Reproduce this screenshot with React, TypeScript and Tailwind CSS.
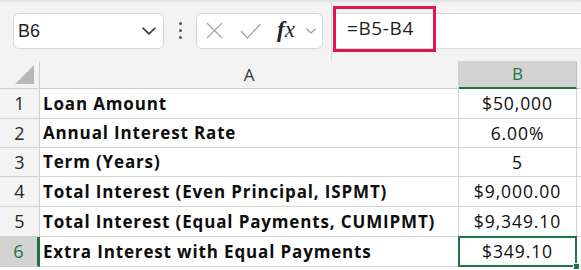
import React from "react";

const rows = [
  { n: "1", a: "Loan Amount", b: "$50,000", h: "h-[30px]" },
  { n: "2", a: "Annual Interest Rate", b: "6.00%", h: "h-[29px]" },
  { n: "3", a: "Term (Years)", b: "5", h: "h-[29px]" },
  { n: "4", a: "Total Interest (Even Principal, ISPMT)", b: "$9,000.00", h: "h-[30px]" },
  { n: "5", a: "Total Interest (Equal Payments, CUMIPMT)", b: "$9,349.10", h: "h-[30px]" },
  { n: "6", a: "Extra Interest with Equal Payments", b: "$349.10", h: "h-[30px]" },
];

function Chevron({ className }: { className?: string }) {
  return (
    <svg viewBox="0 0 14 8" className={className} fill="none" stroke="currentColor" strokeWidth="1.6" strokeLinecap="round" strokeLinejoin="round">
      <path d="M1 1.2 L7 6.8 L13 1.2" />
    </svg>
  );
}

export default function App() {
  return (
    <div className="w-[581px] h-[270px] overflow-hidden bg-white font-['Open_Sans',sans-serif] text-[#1a1a1a]">
      {/* Formula bar */}
      <div className="relative h-[61px] bg-[#f3f3f3] flex items-center">
        <div className="absolute top-0 left-0 right-0 h-[3px] bg-gradient-to-b from-[#dcdcdc] to-[#f3f3f3]" />
        <div className="ml-[13px] w-[151px] h-[36px] bg-white border border-[#d6d6d6] rounded-[6px] flex items-center pl-[4px] pr-[7px]">
          <span className="flex-1 text-[18px] leading-none font-['Liberation_Sans',sans-serif] text-[#1f1f1f]">B6</span>
          <Chevron className="w-[14px] h-[8px] text-[#3a3a3a]" />
        </div>
        <div className="ml-[15px] w-[3px] flex flex-col gap-[4px]">
          <div className="w-[3px] h-[3px] rounded-full bg-[#555]" />
          <div className="w-[3px] h-[3px] rounded-full bg-[#555]" />
          <div className="w-[3px] h-[3px] rounded-full bg-[#555]" />
        </div>
        <div className="ml-[14px] w-[127px] h-[36px] bg-white border border-[#d6d6d6] rounded-[6px] flex items-center pl-[9px]">
          <svg viewBox="0 0 18 18" className="w-[17px] h-[17px] text-[#a8a8a8]" fill="none" stroke="currentColor" strokeWidth="1.4">
            <path d="M1 1 L17 17 M17 1 L1 17" />
          </svg>
          <svg viewBox="0 0 21 16" className="ml-[17px] w-[21px] h-[16px] text-[#a8a8a8]" fill="none" stroke="currentColor" strokeWidth="1.4">
            <path d="M1 8 L7.5 15 L20.5 1" />
          </svg>
          <span className="ml-[16px] text-[23px] leading-none italic font-['Liberation_Serif',serif] text-[#222] -mt-[2px]">
            <span className="font-semibold">f</span>x
          </span>
          <Chevron className="ml-[11px] w-[10px] h-[6px] text-[#9a9a9a]" />
        </div>
        <div className="ml-[8px] self-stretch w-px bg-[#dadada]" />
        <div className="relative flex-1 h-[36px] bg-white border-y border-[#dcdcdc]">
          <div className="absolute left-[1px] top-[-8px] w-[103px] h-[46px] border-[3px] border-[#e0174c] flex items-center pl-[11px]">
            <span className="text-[19px] leading-none tracking-[0.6px] text-[#1f1f1f]">=B5-B4</span>
          </div>
        </div>
      </div>

      {/* Grid */}
      <div className="grid grid-cols-[40px_419px_118px_4px]">
        {/* header */}
        <div className="h-[28px] bg-[#f3f3f3] border-r border-[#cfcfcf] border-b border-b-[#cfcfcf] flex items-end justify-end pr-[5px] pb-[4px]">
          <svg viewBox="0 0 20 20" className="w-[19px] h-[19px]">
            <path d="M20 0 L20 20 L0 20 Z" fill="#b8b8b8" />
          </svg>
        </div>
        <div className="h-[28px] bg-[#f3f3f3] border-r border-[#cfcfcf] border-b border-b-[#cfcfcf] flex items-center justify-center text-[17px] text-[#333]">A</div>
        <div className="h-[28px] bg-[#d3d3d3] border-r border-[#bdbdbd] border-b-2 border-b-[#217346] flex items-center justify-center text-[17px] text-[#217346]">B</div>
        <div className="h-[28px] bg-[#f3f3f3] border-b border-[#cfcfcf]" />

        {rows.map((r, i) => {
          const sel = i === 5;
          return (
            <React.Fragment key={r.n}>
              <div className={`${r.h} ${sel ? "bg-[#d3d3d3] text-[#217346] border-r-[3px] border-r-[#217346]" : "bg-[#f3f3f3] text-[#262626] border-r border-r-[#cfcfcf]"} border-b border-b-[#cfcfcf] flex items-center justify-center text-[18px]`}>
                {r.n}
              </div>
              <div className={`${r.h} border-r border-[#d4d4d4] border-b border-b-[#d4d4d4] flex items-center pl-[3px] text-[17px] tracking-[0.85px] font-bold text-[#0d0d0d] whitespace-nowrap`}>
                {r.a}
              </div>
              <div className={`${r.h} relative border-r border-[#d4d4d4] border-b border-b-[#d4d4d4] flex items-center justify-center text-[17.5px] tracking-[0.9px] text-[#0d0d0d]`}>
                {r.b}
                {sel && (
                  <>
                    <div className="absolute -left-[1px] -top-[1px] -right-[1px] -bottom-[1px] border-2 border-[#217346]" />
                    <div className="absolute -right-[4px] -bottom-[4px] w-[7px] h-[7px] bg-[#217346] border border-white" />
                  </>
                )}
              </div>
              <div className={`${r.h} border-b border-[#d4d4d4]`} />
            </React.Fragment>
          );
        })}
      </div>
    </div>
  );
}
